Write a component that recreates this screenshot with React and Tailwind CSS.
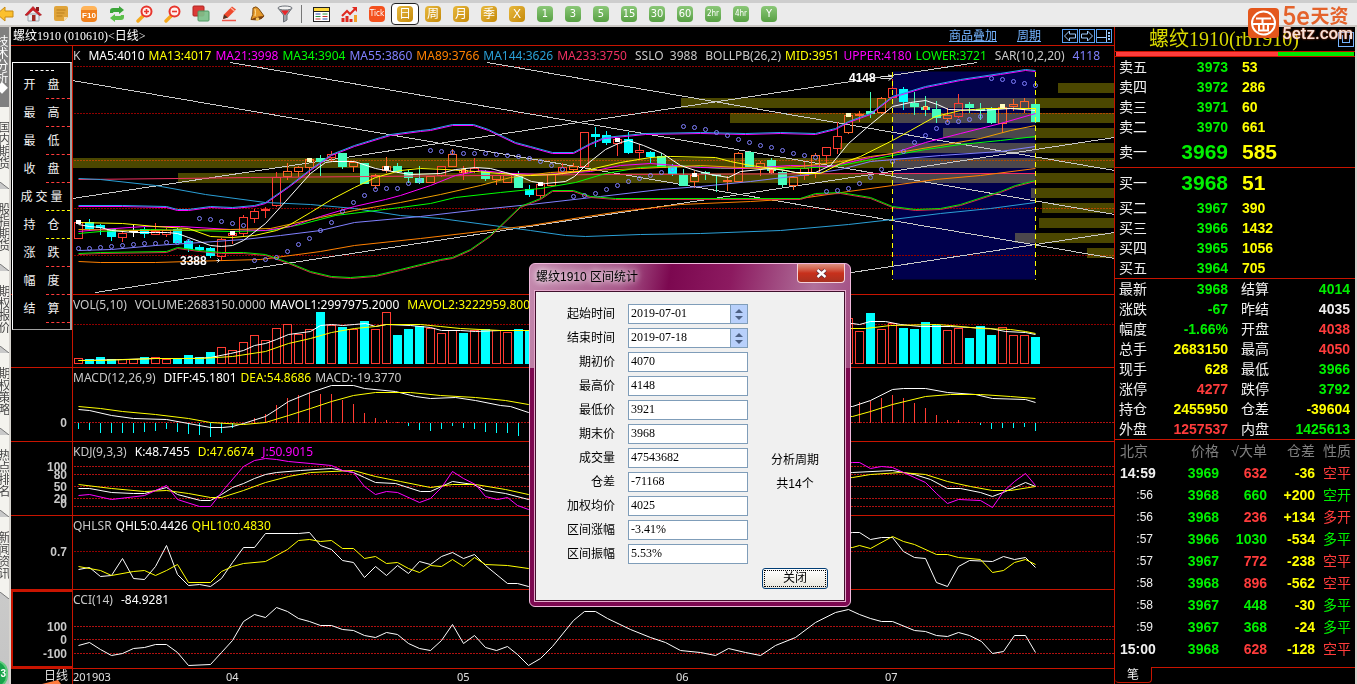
import React from 'react';

const RED = '#ff3c32';
const CYAN = '#00ffff';
const X0 = 78;
const STEP = 11;

// [kind, high, top, bottom, low]
const candles = [
  ['r', 222, 222, 238, 238], ['c', 218, 222, 228, 229], ['c', 223, 225, 227, 234], ['c', 229, 229, 236, 240],
  ['r', 230, 233, 237, 241], ['w', 224, 230, 230, 236], ['c', 226, 229, 233, 237], ['r', 222, 231, 234, 234],
  ['r', 227, 230, 234, 236], ['c', 227, 229, 242, 242], ['c', 238, 241, 248, 251], ['c', 244, 247, 249, 250],
  ['c', 246, 248, 255, 257], ['r', 237, 239, 256, 260], ['r', 231, 233, 235, 243], ['r', 214, 217, 233, 236],
  ['r', 208, 211, 218, 222], ['r', 206, 209, 210, 217], ['r', 171, 177, 205, 206], ['r', 162, 171, 176, 179],
  ['r', 165, 167, 171, 176], ['r', 157, 159, 167, 174], ['c', 154, 158, 161, 175], ['r', 150, 154, 157, 161],
  ['c', 152, 153, 166, 168], ['r', 160, 162, 166, 171], ['c', 163, 163, 183, 183], ['r', 173, 175, 185, 188],
  ['r', 156, 166, 170, 172], ['c', 162, 166, 171, 172], ['c', 169, 172, 177, 182], ['c', 165, 178, 182, 183],
  ['r', 176, 176, 182, 182], ['r', 165, 166, 175, 176], ['r', 148, 154, 166, 166], ['r', 165, 170, 172, 179],
  ['r', 157, 168, 171, 172], ['c', 169, 171, 178, 180], ['r', 175, 175, 179, 184], ['r', 175, 175, 182, 182],
  ['c', 170, 176, 187, 187], ['c', 184, 189, 194, 196], ['r', 182, 184, 195, 198], ['r', 173, 174, 185, 186],
  ['r', 162, 167, 172, 174], ['r', 162, 166, 169, 170], ['r', 132, 132, 166, 166], ['c', 126, 134, 136, 146],
  ['c', 130, 135, 142, 144], ['r', 138, 139, 143, 155], ['c', 131, 139, 152, 153], ['r', 143, 150, 152, 158],
  ['c', 150, 152, 156, 162], ['c', 152, 156, 167, 167], ['c', 163, 166, 173, 175], ['c', 168, 175, 185, 185],
  ['r', 170, 175, 181, 187], ['c', 170, 172, 173, 179], ['c', 173, 174, 174, 191], ['r', 175, 180, 180, 190],
  ['r', 151, 153, 181, 181], ['c', 150, 152, 166, 166], ['r', 160, 163, 168, 175], ['c', 157, 160, 170, 173],
  ['c', 170, 172, 184, 186], ['r', 175, 177, 185, 189], ['r', 161, 168, 175, 179], ['r', 152, 155, 172, 177],
  ['r', 146, 147, 155, 162], ['r', 121, 136, 148, 153], ['r', 113, 115, 132, 133], ['r', 110, 114, 114, 121],
  ['c', 91, 111, 113, 117], ['r', 96, 98, 112, 113], ['r', 78, 88, 97, 97], ['c', 86, 89, 101, 109],
  ['c', 91, 103, 106, 114], ['c', 95, 107, 109, 115], ['c', 100, 109, 117, 122], ['r', 107, 115, 118, 121],
  ['r', 93, 103, 116, 117], ['c', 101, 104, 107, 112], ['c', 102, 109, 109, 119], ['c', 106, 109, 122, 123],
  ['r', 105, 107, 123, 132], ['r', 98, 104, 106, 110], ['r', 97, 101, 108, 112], ['c', 104, 104, 121, 122],
];

const sar = [
  248, 248, 247, 246, 245, 244, 243, 243, 242, 242, 241, 218, 219, 221, 223, 225, 260, 259, 257, 251, 244, 238,
  230, 222, 211, 202, 195, 189, 188, 188, 183, 180, 150, 151, 152, 153, 153, 153, 154, 155, 156, 158, 161, 165,
  169, 196, 195, 193, 189, 185, 181, 178, 175, 172, 169, 126, 127, 129, 132, 135, 139, 142, 145, 147, 150, 153,
  155, 157, 191, 190, 188, 183, 177, 169, 161, 151, 142, 135, 128, 122, 121, 119, 116, 78, 79, 81, 83, 85,
];

// [left, top] of every price level bar, all of them run to the right edge
const levels = [
  [1058, 83], [681, 98], [730, 113], [943, 128], [840, 143], [73, 158], [178, 173], [1031, 188], [1042, 203],
  [1039, 218], [1015, 233], [1087, 248],
];

// [bar index, y, core colour]
const marks = [
  [0, 222, '#fff'], [14, 233, '#fff'], [21, 160, '#ffffc0'], [28, 168, '#fff'], [35, 171, RED], [42, 184, '#fff'],
  [49, 140, '#fff'], [56, 175, '#fff'], [63, 171, RED], [70, 115, '#ffffc0'], [77, 108, RED], [84, 106, '#ffffc0'],
];

const trends = [
  [72, 80, 1114, 258], [230, 62, 1114, 214], [487, 62, 1114, 170],
  [72, 198, 977, 62], [95, 292, 1114, 137], [700, 295, 1114, 232],
];

const upper = '78,206 122,206 166,207 177,210 188,210 210,207 232,208 254,206 265,203 288,187 310,170 331,155 354,146 380,138 390,135 420,131 430,130 452,125 473,125 488,130 515,143 530,147 552,153 573,153 590,144 604,138 645,134 700,133 745,134 780,133 815,134 835,129 848,122 870,114 892,97 925,87 960,80 1000,74 1025,70 1035,71';
const lower = '78,253 100,252 166,251 177,247 199,250 221,252 243,252 265,254 288,262 310,271 331,276 350,277 375,275 400,269 440,259 452,257 470,249 490,235 520,206 540,198 552,190 573,190 590,196 615,198 720,198 800,198 815,193 840,192 870,197 892,206 915,209 940,208 960,204 1000,191 1015,185 1035,180';

const priceLines = [
  ['#f03060', '78,179 178,178 250,177 370,176 600,174 892,173 1035,173'],
  ['#2a9fd6', '78,178 100,179 155,185 205,194 265,202 310,204 354,208 400,215 440,218 500,226 530,230 565,235 585,236 640,234 700,233 780,230 848,224 892,219 940,213 990,208 1035,202'],
  ['#ff8000', '78,261 100,262 155,262 188,261 260,259 320,251 354,245 420,238 480,231 530,225 580,217 620,211 680,204 750,201 800,198 848,191 892,185 935,179 980,175 1035,168'],
  ['#8080ff', '78,250 111,249 155,245 200,242 243,239 280,235 320,230 354,222 420,216 480,209 530,204 600,196 660,189 700,186 750,181 800,175 840,169 870,161 940,155 1000,151 1035,146'],
  ['#00ff00', '78,233 100,231 150,229 190,230 232,231 270,230 300,224 335,215 400,207 430,203 455,197 500,192 540,188 575,182 605,173 640,167 680,165 720,168 760,168 800,168 840,165 892,155 925,149 960,144 1000,140 1035,136'],
  ['#ff00ff', '78,231 100,229 144,226 180,226 230,229 265,230 290,226 320,216 354,206 385,199 400,195 430,185 455,175 480,170 510,173 545,174 590,171 620,165 650,163 700,167 745,168 790,165 830,166 870,157 892,153 925,142 960,133 1000,123 1035,113'],
  ['#f0a000', '78,229 140,230 230,229 270,228 320,217 354,210 400,202 440,194 480,185 510,177 550,172 590,170 640,168 700,165 760,168 800,166 840,161 870,156 892,153 940,145 980,138 1010,130 1035,125'],
  ['#ffff00', '78,222 122,223 155,226 188,228 210,236 232,237 254,235 276,230 288,225 310,212 331,199 354,187 375,177 400,170 420,168 445,169 475,171 500,173 530,175 555,174 585,170 620,162 650,157 670,156 715,157 730,161 750,165 780,169 800,173 820,173 840,163 860,156 892,140 910,130 935,116 960,110 985,108 1035,108'],
  ['#ffffff', '78,224 89,226 100,227 111,230 133,232 155,232 167,232 177,233 188,237 199,241 210,245 221,246 232,245 243,240 265,223 285,201 310,173 325,162 332,161 354,161 375,168 386,170 410,174 440,173 455,169 475,167 490,168 505,172 520,176 531,181 545,183 565,181 574,176 586,164 605,149 620,142 628,140 643,145 662,153 680,165 695,170 710,174 728,177 740,171 760,169 770,168 785,170 795,172 815,172 830,165 848,143 870,124 892,106 910,102 925,100 937,104 948,109 980,110 1010,108 1035,110'],
  ['#ff00ff', upper],
];

const volumes = [
  [0, 'r', 358], [1, 'c', 359], [2, 'c', 357], [3, 'c', 359], [4, 'r', 359], [5, 'r', 359], [6, 'c', 357],
  [7, 'r', 357], [8, 'r', 359], [9, 'c', 359], [10, 'c', 355], [11, 'c', 357], [12, 'c', 352], [13, 'r', 347],
  [14, 'r', 350], [15, 'r', 342], [16, 'r', 335], [17, 'r', 340], [18, 'r', 328], [19, 'r', 324], [20, 'r', 334],
  [21, 'r', 329], [22, 'c', 312], [23, 'r', 325], [24, 'c', 327], [25, 'r', 329], [26, 'c', 321], [27, 'r', 329],
  [28, 'r', 312], [29, 'c', 335], [30, 'c', 329], [31, 'c', 326], [32, 'r', 328], [33, 'r', 333], [34, 'r', 330],
  [35, 'c', 333], [36, 'r', 330], [37, 'c', 329], [38, 'r', 330], [39, 'r', 332], [40, 'c', 329], [41, 'c', 330],
  [70, 'r', 318], [71, 'r', 331], [72, 'c', 313], [73, 'r', 329], [74, 'r', 323], [75, 'c', 328], [76, 'c', 329],
  [77, 'c', 322], [78, 'c', 325], [79, 'r', 330], [80, 'r', 328], [81, 'c', 338], [82, 'c', 326], [83, 'c', 335],
  [84, 'r', 327], [85, 'r', 335], [86, 'r', 335], [87, 'c', 337],
];

const macdLeft = [428, 429, 432, 432, 432, 432, 431, 430, 428, 431, 433, 434, 436, 432, 427, 422, 417, 413, 404, 397, 394, 392, 393, 393, 399, 403, 412, 417, 419, 421, 425, 429, 430, 428, 425, 427, 428, 431, 432, 432, 435];
const macdRight = [401, 400, 397, 394, 397, 402, 407, 414, 419, 419, 421, 424, 428, 427, 427, 426, 430];
const macd = [...macdLeft.map((y, i) => [i, y]), ...macdRight.map((y, i) => [i + 71, y])];

const asks = [['卖五', 3973, 53], ['卖四', 3972, 286], ['卖三', 3971, 60], ['卖二', 3970, 661], ['卖一', 3969, 585]];
const bids = [['买一', 3968, 51], ['买二', 3967, 390], ['买三', 3966, 1432], ['买四', 3965, 1056], ['买五', 3964, 705]];

const G = 'text-[#00f000]';
const R = 'text-[#ff3c3c]';
const Y = 'text-[#ffff00]';
const W = 'text-[#f0f0f0]';

const stats = [
  ['最新', '3968', G, '结算', '4014', G],
  ['涨跌', '-67', G, '昨结', '4035', W],
  ['幅度', '-1.66%', G, '开盘', '4038', R],
  ['总手', '2683150', Y, '最高', '4050', R],
  ['现手', '628', Y, '最低', '3966', G],
  ['涨停', '4277', R, '跌停', '3792', G],
  ['持仓', '2455950', Y, '仓差', '-39604', Y],
  ['外盘', '1257537', R, '内盘', '1425613', G],
];

const ticks = [
  ['14:59', 3969, 632, R, '-36', '空平', R],
  [':56', 3968, 660, G, '+200', '空开', G],
  [':56', 3968, 236, R, '+134', '多开', R],
  [':57', 3966, 1030, G, '-534', '多平', G],
  [':57', 3967, 772, R, '-238', '空平', R],
  [':58', 3968, 896, R, '-562', '空平', R],
  [':58', 3967, 448, G, '-30', '多平', G],
  [':59', 3967, 368, G, '-24', '多平', G],
  ['15:00', 3968, 628, R, '-128', '空平', R],
];

const inLevel = (x, y) => levels.some(([l, t]) => x >= l && y >= t - 1 && y <= t + 11);

/* ---------- toolbar ---------- */

function Magnifier({ plus }) {
  return (
    <svg width="18" height="18" viewBox="0 0 18 18">
      <path d="M2 16 L7 11" stroke="#f5a81c" strokeWidth="3.4" strokeLinecap="round" />
      <circle cx="10.5" cy="6.5" r="5" fill="#fff0ee" stroke="#e8352c" strokeWidth="2" />
      <path d={plus ? 'M8 6.5h5M10.5 4v5' : 'M8 6.5h5'} stroke="#e8352c" strokeWidth="1.6" />
    </svg>
  );
}

const tools = [
  ['返回', <svg width="18" height="18" viewBox="0 0 18 18"><path d="M1 9 L9 2 V6 H17 V12 H9 V16 Z" fill="#fbc02d" stroke="#c98a10" /></svg>],
  ['首页', (
    <svg width="18" height="18" viewBox="0 0 18 18">
      <path d="M4 9h11v7H4z" fill="#e8eef2" stroke="#9aa4ab" />
      <path d="M12 2h3v4h-3z" fill="#8c1d1d" />
      <path d="M1 10 L9 1.5 L17.5 10 L15.5 10.5 L9 5 L3 10.5 Z" fill="#d21f26" stroke="#9c1218" strokeWidth=".6" />
      <path d="M8 10h3.5v6H8z" fill="#a02a22" />
    </svg>
  )],
  ['资讯', (
    <svg width="16" height="18" viewBox="0 0 16 18">
      <path d="M1 3q0-2 2-2h10q2 0 2 2v9l-4 4H3q-2 0-2-2z" fill="#e0a43a" />
      <path d="M15 12l-4 4v-4z" fill="#f7dfae" />
      <path d="M3.500 5h9M3.500 8h8M3.500 11h6" stroke="#b97f1c" />
    </svg>
  )],
  ['F10', (
    <span className="relative flex h-4 w-4 items-end justify-center rounded-sm border-t-4 border-[#ffb45a] bg-[#f0801e] font-['Liberation_Sans',sans-serif] text-[8px] leading-3 font-bold text-white">F10</span>
  )],
  ['刷新', (
    <svg width="16" height="16" viewBox="0 0 16 16">
      <path d="M1 7V5q0-3 3-3h6V0l5 4-5 4V6H5q-1 0-1 1z" fill="#3ca53a" />
      <path d="M15 9v2q0 3-3 3H6v2l-5-4 5-4v2h5q1 0 1-1z" fill="#5cbf4a" />
    </svg>
  )],
  ['放大', <Magnifier plus />],
  ['缩小', <Magnifier />],
  ['叠加', (
    <svg width="18" height="18" viewBox="0 0 18 18">
      <rect x="1" y="1" width="11" height="10" rx="1" fill="#dc3a37" stroke="#b02423" />
      <rect x="6" y="6" width="11" height="10" rx="1" fill="#7cc08a" fillOpacity=".92" stroke="#4f9a63" />
    </svg>
  )],
  ['画线', (
    <svg width="18" height="18" viewBox="0 0 18 18">
      <path d="M2 15.500h14" stroke="#f0564a" strokeWidth="1.500" />
      <path d="M4 9.500 L12 1.500 L16 4.500 L8 12.500 L3 14 Z" fill="#ee4a2e" />
      <path d="M4 9.500 L8 12.500 L3 14 Z" fill="#4a3526" />
      <path d="M11 3 L14.500 6" stroke="#ffb19c" strokeWidth="1.500" />
    </svg>
  )],
  ['预警', (
    <svg width="18" height="18" viewBox="0 0 18 18">
      <path d="M5 3Q8 .5 10.500 3.500L16 11 Q13 16 3 14.500Q5.500 10 5 3z" fill="#e59a2b" stroke="#7c4a12" />
      <path d="M3 14.500Q9 11 16 11Q13 16 3 14.500z" fill="#7c4010" />
      <circle cx="9.500" cy="14" r="1.800" fill="#f6c65c" />
      <path d="M7 4Q8 7 7 11" stroke="#ffe2a0" fill="none" />
    </svg>
  )],
  ['筛选', (
    <svg width="16" height="18" viewBox="0 0 16 18">
      <path d="M1 3 L6.500 10 V17 L10 15 V10 L15 3 Z" fill="#9ea3a9" stroke="#6b7077" />
      <ellipse cx="8" cy="3" rx="7" ry="2" fill="#f3f3f3" stroke="#6b7077" />
      <path d="M4 5.500h8l-4 5z" fill="#e8262a" />
    </svg>
  )],
];

const views = [
  ['报价表', (
    <svg width="17" height="17" viewBox="0 0 17 17">
      <rect x=".5" y="1.500" width="16" height="14" fill="#fff" stroke="#222" />
      <path d="M1 2h15v3H1z" fill="#ffd83a" />
      <path d="M1 5.500h15" stroke="#222" />
      <path d="M2.500 8h5M9.500 13h5" stroke="#2344a8" />
      <path d="M2.500 10.500h5M9.500 8h5" stroke="#28953a" />
      <path d="M2.500 13h5M9.500 10.500h5" stroke="#c22a2a" />
    </svg>
  )],
  ['走势', (
    <svg width="17" height="17" viewBox="0 0 17 17">
      <path d="M2 16v-4M6 16v-6M10 16v-3" stroke="#e02a20" strokeWidth="3" />
      <path d="M14.500 16v-7" stroke="#f1a22a" strokeWidth="3" />
      <path d="M1 10 L6 5 L9 8 L15 2" stroke="#e02a20" strokeWidth="2" fill="none" />
      <path d="M11 1h5v5z" fill="#e02a20" />
    </svg>
  )],
  ['分笔', (
    <span className="flex h-4 w-4 items-center justify-center rounded-sm bg-[#f4511e] font-['DejaVu_Sans_Condensed',sans-serif] text-[8px] leading-4 text-white">Tick</span>
  )],
];

const goldPeriods = ['日', '周', '月', '季', 'X'];
const greenPeriods = ['1', '3', '5', '15', '30', '60', '2hr', '4hr', 'Y'];

function Toolbar() {
  return (
    <header className="overflow-hidden border-t-[3px] border-b-2 border-t-[#cdcdcd] border-b-[#cbc8c4] bg-[#ebebeb]">
      <div className="-ml-[9px] flex h-[22px] items-center">
        {tools.map(([name, icon]) => (
          <button key={name} aria-label={name} className="flex w-7 justify-center">{icon}</button>
        ))}
        <div className="mr-[5px] ml-[2px] h-[18px] w-px bg-[#777]" />
        {views.map(([name, icon]) => (
          <button key={name} aria-label={name} className="flex w-7 justify-center">{icon}</button>
        ))}
        {goldPeriods.map((p, i) => (
          <button key={p} className={`flex h-[22px] w-7 items-center justify-center ${i === 0 ? 'rounded border border-[#222] bg-white' : ''}`}>
            <span className="flex h-4 w-4 items-center justify-center rounded-sm bg-gradient-to-br from-[#e8b93c] to-[#c58a00] text-[12px] leading-4 text-white">{p}</span>
          </button>
        ))}
        {greenPeriods.map((p) => (
          <button key={p} className="flex w-7 justify-center">
            <span className={`flex h-4 w-4 items-center justify-center rounded-sm bg-gradient-to-b from-[#8bc878] to-[#57a043] leading-4 text-white ${p.length > 2 ? "font-['DejaVu_Sans_Condensed',sans-serif] text-[8px]" : "font-['DejaVu_Sans_Condensed',sans-serif] text-[11px]"}`}>{p}</span>
          </button>
        ))}
      </div>
    </header>
  );
}

function Brand() {
  return (
    <a href="#5etz" className="absolute top-2 right-1 z-10 flex items-start gap-[3px] font-['Roboto','Noto_Sans_CJK_SC',sans-serif]">
      <svg width="31" height="30" viewBox="0 0 31 30">
        <rect width="31" height="30" rx="4" fill="#e4571c" />
        <circle cx="15.500" cy="15" r="11.500" fill="none" stroke="#fff" strokeWidth="2" />
        <path d="M8 10.500h15M5 16h9.500v-5M11 16v6.500h9V16h-5M20 16h6M15.500 16v7" stroke="#fff" strokeWidth="2" fill="none" />
      </svg>
      <span className="flex flex-col">
        <span className="flex h-[17px] items-center gap-px text-[#e4632c]">
          <span className="text-[25px] leading-4 font-medium">5e</span>
          <span className="text-[19px] leading-4 font-bold">天资</span>
        </span>
        <span className="text-[17px] leading-4 font-medium text-[#f7e2da] [text-shadow:0_0_2px_#e4571c]">5etz.com</span>
      </span>
    </a>
  );
}

/* ---------- left tabs ---------- */

const tabs = ['国内期货', '股指期货', '期权报价', '期权策略', '热点排名', '新闻资讯'];

function SideTabs() {
  return (
    <nav className="relative flex w-[11px] shrink-0 flex-col overflow-hidden border-r-2 border-[#d6d3ce] bg-gradient-to-b from-[#f2f1ec] to-[#c4c4c4] text-[12px] leading-3">
      <a href="#tech" className="flex h-20 flex-col items-start bg-[#808080] pt-2 text-white">
        <span className="-ml-[5px] [writing-mode:vertical-rl]">技术分析</span>
        <span className="-ml-1">◆</span>
      </a>
      {tabs.map((t) => (
        <a key={t} href={`#${t}`} className="flex h-[82px] flex-col justify-between bg-[#f4f3ee] pt-[14px] text-[#444]">
          <span className="-ml-[5px] [writing-mode:vertical-rl]">{t}</span>
          <svg width="9" height="7" viewBox="0 0 9 7"><path d="M0 0 L9 7 H0 Z" fill="#c9c9c9" /><path d="M0 0 L9 7" stroke="#777" /></svg>
        </a>
      ))}
      <span className="absolute -bottom-1 -left-4 flex h-7 w-6 items-center justify-end rounded-full border-2 border-[#5ecb7c] bg-[#17a34a] text-[10px] font-bold text-white">3</span>
    </nav>
  );
}

/* ---------- chart panes ---------- */

function Grid({ ys, color = '#b01010' }) {
  return ys.map((y) => (
    <line key={y} x1="73" x2="1114" y1={y} y2={y} stroke={color} strokeDasharray="2 1" shapeRendering="crispEdges" />
  ));
}

function Line({ color, points }) {
  return <polyline points={points} fill="none" stroke={color} strokeWidth="1" vectorEffect="non-scaling-stroke" />;
}

function Bar({ x, color, hollow, top, bottom }) {
  return (
    <rect x={x - 4} y={top} width="8" height={Math.max(bottom - top, 1)} fill={hollow ? 'none' : color} stroke={color} shapeRendering="crispEdges" />
  );
}

function Legend({ items }) {
  return (
    <p className="z-[1] flex gap-1 self-start justify-self-start overflow-hidden font-['Noto_Sans',sans-serif] text-[12px] leading-5 whitespace-nowrap [grid-area:1/1]">
      {items.map(([text, color, space]) => (
        <span key={text} className={`${color} ${space ? 'ml-1' : ''}`}>{text}</span>
      ))}
    </p>
  );
}

function Pane({ y, h, size, axis = [], legend, children, active }) {
  return (
    <section className={`flex border-b border-[#c81400] ${size}`}>
      <div className={`w-[62px] shrink-0 border-r border-[#c81400] ${active ? 'border-2' : ''}`}>
        {axis.length > 0 && (
          <svg width="58" height={h} viewBox={`0 ${y} 58 ${h}`} className="overflow-visible font-['Liberation_Sans',sans-serif] text-[12px] font-bold">
            {axis.map(([label, at]) => (
              <text key={label + at} x={active ? 54 : 56} y={at + (active ? 3 : 5)} textAnchor="end" fill="#c8c8c8">{label}</text>
            ))}
          </svg>
        )}
      </div>
      <div className="grid min-w-0 flex-1 grid-rows-1">
        <svg viewBox={`73 ${y} 1041 ${h}`} preserveAspectRatio="none" className="h-full w-full [grid-area:1/1]">
          <g transform="translate(.5 .5)">{children}</g>
        </svg>
        {legend && <Legend items={legend} />}
      </div>
    </section>
  );
}

function PriceChart() {
  return (
    <>
      <rect x="892" y="71" width="143" height="208" fill="#00004c" />
      <Grid ys={[66, 113, 160, 208, 255]} color="#900000" />
      {levels.map(([l, t]) => (
        <rect key={t} x={l - 0.5} y={t - 0.5} width={1114 - l} height="10" fill="#4b4700" className="mix-blend-screen" />
      ))}
      {trends.map(([x1, y1, x2, y2]) => (
        <line key={`${x1}-${y1}`} x1={x1} y1={y1} x2={x2} y2={y2} stroke="#c8c8c8" shapeRendering="crispEdges" />
      ))}
      {candles.map(([kind, high, top, bottom, low], i) => {
        const x = X0 + STEP * i;
        const lit = inLevel(x, (top + bottom) / 2);
        const color = kind === 'w' ? '#fff' : kind === 'r' ? (lit ? '#ff6428' : RED) : lit ? '#46ffbe' : CYAN;
        return (
          <g key={i}>
            <path d={`M${x} ${high}V${top}M${x} ${bottom}V${low}`} stroke={color} shapeRendering="crispEdges" />
            <Bar x={x} color={color} hollow={kind === 'r'} top={top} bottom={bottom} />
          </g>
        );
      })}
      {priceLines.map(([color, points], i) => <Line key={i} color={color} points={points} />)}
      <g transform="translate(0 -1)"><Line color="#2aa0f0" points={upper} /></g>
      <g transform="translate(0 1)"><Line color="#d82848" points={lower} /></g>
      <Line color="#00e800" points={lower} />
      {sar.map((y, i) => (
        <circle key={i} cx={X0 + STEP * i} cy={y} r="2" fill="none" stroke="#8080ff" />
      ))}
      {marks.map(([i, y, color]) => (
        <g key={i} shapeRendering="crispEdges">
          <rect x={X0 + STEP * i - 2.5} y={y - 2.5} width="5" height="4" fill={color === RED ? '#ffd060' : color} />
          {color === RED && <rect x={X0 + STEP * i - 1.5} y={y - 1.5} width="3" height="3" fill={RED} />}
        </g>
      ))}
      <path d="M892 71V279M1035 71V279" stroke="#ffff00" strokeDasharray="5 4" shapeRendering="crispEdges" />
      <path d="M880 76H891M880 78H891M888 74L892 77L888 80M216 260H219M217 258L219 260L217 262" stroke="#e0e0e0" fill="none" />
    </>
  );
}

function Charts() {
  return (
    <div className="relative">
      <Pane
        y={46} h={248} size="h-[249px]"
        legend={[
          ['K', 'text-[#c8c8c8]'], ['MA5:4010', 'text-white', true], ['MA13:4017', 'text-[#ffff00]'],
          ['MA21:3998', 'text-[#ff00ff]'], ['MA34:3904', 'text-[#00ff00]'], ['MA55:3860', 'text-[#8080ff]'],
          ['MA89:3766', 'text-[#ff8000]'], ['MA144:3626', 'text-[#2a9fd6]'], ['MA233:3750', 'text-[#f03060]'],
          ['SSLO  3988', 'text-[#c8c8c8] whitespace-pre', true], ['BOLLPB(26,2)', 'text-[#c8c8c8]', true],
          ['MID:3951', 'text-[#ffff00]'], ['UPPER:4180', 'text-[#ff00ff]'], ['LOWER:3721', 'text-[#00ff00]'],
          ['SAR(10,2,20)', 'text-[#c8c8c8]', true], ['4118', 'text-[#8080ff]', true],
        ]}
      >
        <PriceChart />
      </Pane>

      <Pane
        y={295} h={72} size="h-[73px]"
        legend={[
          ['VOL(5,10)', 'text-[#c8c8c8]'], ['VOLUME:2683150.0000', 'text-[#c8c8c8]', true],
          ['MAVOL1:2997975.2000', 'text-white'], ['MAVOL2:3222959.8000', 'text-[#ffff00]', true],
        ]}
      >
        <Grid ys={[324]} color="#900000" />
        {volumes.map(([i, kind, top]) => (
          <Bar key={i} x={X0 + STEP * i} color={kind === 'r' ? RED : CYAN} hollow={kind === 'r'} top={top} bottom={363} />
        ))}
        <Line color="#fff" points="78,360 122,359 155,358 190,358 210,357 230,353 243,350 254,345 265,343 276,339 288,334 310,331 320,325 331,324 342,325 354,324 365,323 375,326 386,324 410,325 430,327 441,330 460,330 475,331 500,330 528,330 852,323 859,324 870,321 885,321 900,324 920,326 950,326 990,328 1005,331 1025,332 1035,334" />
        <Line color="#ffff00" points="78,360 100,360 155,358 200,358 232,356 265,351 288,343 310,338 331,332 354,328 375,326 386,324 420,324 440,326 460,328 500,330 528,330 852,328 865,328 890,325 936,324 950,325 980,328 1010,329 1025,331 1035,333" />
      </Pane>

      <Pane
        y={368} h={73} size="h-[74px]" axis={[['0', 422]]}
        legend={[
          ['MACD(12,26,9)', 'text-[#c8c8c8]'], ['DIFF:45.1801', 'text-white', true],
          ['DEA:54.8686', 'text-[#ffff00]'], ['MACD:-19.3770', 'text-[#c8c8c8]'],
        ]}
      >
        <Grid ys={[422]} />
        {macd.map(([i, y]) => (
          <line key={i} x1={X0 + STEP * i} x2={X0 + STEP * i} y1="422" y2={y} stroke={y > 422 ? CYAN : RED} shapeRendering="crispEdges" />
        ))}
        <Line color="#fff" points="78,409 89,410 111,415 133,418 166,419 188,423 210,427 222,427 232,426 243,423 265,416 276,409 288,401 310,392 331,385 353,385 364,388 395,391 415,396 430,398 455,397 475,400 500,405 510,406 528,412 852,406 870,400 892,389 903,388 925,388 947,392 975,394 992,398 1025,399 1035,402" />
        <Line color="#ffff00" points="78,406 100,408 122,411 155,414 188,418 210,422 243,424 265,422 288,415 310,408 331,401 353,395 375,392 410,392 440,395 475,397 505,400 528,404 852,416 870,411 892,404 925,396 950,394 980,394 1010,396 1035,398" />
      </Pane>

      <Pane
        y={442} h={73} size="h-[74px]"
        axis={[['100', 466], ['80', 474], ['50', 486], ['20', 498], ['0', 503]]}
        legend={[
          ['KDJ(9,3,3)', 'text-[#c8c8c8]'], ['K:48.7455', 'text-white', true],
          ['D:47.6674', 'text-[#ffff00]', true], ['J:50.9015', 'text-[#ff00ff]', true],
        ]}
      >
        <Grid ys={[466, 474, 486, 498, 506]} />
        <Line color="#fff" points="78,488 89,488 111,492 133,493 144,493 166,487 177,494 200,500 210,500 221,494 232,487 243,483 254,478 265,474 276,472 300,470 331,468 353,472 364,477 375,482 395,483 420,491 430,491 452,481 473,484 485,490 505,493 528,499 852,472 892,470 914,474 930,479 947,488 960,488 980,492 992,496 1005,491 1025,482 1035,486" />
        <Line color="#ffff00" points="78,484 111,488 144,491 166,490 188,493 210,497 221,497 243,490 265,482 288,476 310,472 353,470 375,476 400,481 430,487 452,484 475,484 505,489 528,494 852,477 870,474 900,472 925,474 947,481 970,486 992,490 1010,490 1035,486" />
        <Line color="#ff00ff" points="78,495 89,494 111,499 144,495 155,490 166,485 177,499 199,506 210,506 225,487 243,466 254,460 265,458 276,459 288,461 310,463 331,465 342,470 353,472 364,486 375,494 386,491 397,492 419,502 430,498 441,487 452,471 463,478 475,484 485,496 497,499 507,497 517,505 528,509 852,462 859,462 870,468 881,466 892,467 903,472 925,482 936,493 947,503 958,499 980,500 992,507 1003,491 1014,481 1025,473 1035,485" />
      </Pane>

      <Pane
        y={516} h={73} size="h-[74px]" axis={[['0.7', 551]]}
        legend={[['QHLSR', 'text-[#c8c8c8]'], ['QHL5:0.4426', 'text-white'], ['QHL10:0.4830', 'text-[#ffff00]']]}
      >
        <Grid ys={[551]} color="#900000" />
        <Line color="#fff" points="78,569 89,567 100,576 111,575 122,558 133,578 144,579 155,566 166,545 177,574 188,585 199,584 210,586 221,578 232,562 243,547 254,547 265,533 298,533 309,532 320,545 331,549 342,560 353,562 364,577 375,566 386,575 397,565 408,573 419,561 430,564 441,556 452,552 463,558 474,554 485,565 507,583 517,583 528,586 852,532 859,532 870,539 881,537 892,537 903,551 914,557 925,558 936,582 947,586 958,566 969,560 992,561 1003,556 1014,559 1025,557 1035,567" />
        <Line color="#ffff00" points="78,566 100,570 111,575 133,571 144,570 155,575 166,570 177,564 188,582 210,582 221,571 232,566 243,563 265,561 287,549 298,540 309,539 320,541 331,540 342,548 353,548 364,558 375,556 386,563 397,562 408,568 419,572 430,565 441,566 452,559 463,566 474,557 485,564 507,565 528,568 852,547 859,545 870,548 892,536 903,541 914,544 936,554 947,554 958,557 980,559 992,572 1003,570 1014,562 1025,559 1035,564" />
      </Pane>

      <Pane
        active y={590} h={78} size="h-[79px]" axis={[['100', 626], ['0', 639], ['-100', 653]]}
        legend={[['CCI(14)', 'text-[#c8c8c8]'], ['-84.9281', 'text-white', true]]}
      >
        <Grid ys={[626, 639, 653]} />
        <Line color="#fff" points="78,645 89,642 100,649 111,655 122,653 133,648 144,647 155,644 166,644 177,652 188,665 210,664 221,652 232,640 243,621 254,614 265,617 276,607 287,611 298,618 309,621 320,625 331,625 342,629 353,630 364,635 375,637 386,632 397,634 408,643 419,648 430,650 441,640 452,624 463,643 474,635 485,647 496,650 507,646 517,654 528,665 540,658 552,646 573,620 584,611 595,611 607,618 630,629 650,637 665,642 680,650 700,652 715,655 728,648 745,652 760,655 775,645 795,637 815,622 835,612 848,609 859,614 870,618 881,621 892,621 914,630 925,631 936,635 947,636 958,632 969,635 981,641 992,653 1003,651 1014,635 1025,635 1035,652" />
      </Pane>

      <span className="absolute top-[26px] left-[838px] font-['Liberation_Sans',sans-serif] text-[12px] leading-3 font-bold text-white">4148</span>
      <span className="absolute top-[209px] left-[169px] font-['Liberation_Sans',sans-serif] text-[12px] leading-3 font-bold text-white">3388</span>
      <CursorPanel />
    </div>
  );
}

const cursorRows = [
  ['开盘', false], ['最高', false], ['最低', false], ['收盘', false], ['成交量', true],
  ['持仓', true], ['涨跌', false], ['幅度', false], ['结算', false],
];

function CursorPanel() {
  return (
    <aside className="absolute top-4 left-px w-[60px] border border-r-2 border-white border-r-[#a0a0a0] border-b-[#a0a0a0] bg-black pb-[6px] text-[12px] text-[#f0f0f0]">
      <div className="ml-[17px] h-2 w-6 border-b border-dashed border-white" />
      {cursorRows.map(([name, yellow]) => (
        <div key={name} className="flex h-7 flex-col items-end">
          <div className={`flex h-[27px] w-full items-center justify-center leading-4 ${name.length === 3 ? 'gap-[3px]' : 'gap-3'}`}>
            {[...name].map((c) => <span key={c}>{c}</span>)}
          </div>
          <div className={`w-6 border-b border-dashed ${yellow ? 'border-[#ffff00]' : 'border-[#ff3c3c]'}`} />
        </div>
      ))}
    </aside>
  );
}

function ChartHeader() {
  return (
    <div className="flex h-[19px] items-center border-b border-[#c81400] pl-[2px] text-[12px] leading-[18px] text-white">
      <h1 className="flex-1 font-['Liberation_Serif','Noto_Sans_CJK_SC',serif]">螺纹1910 (010610)&lt;日线&gt;</h1>
      <a href="#overlay" className="text-[#74b4ff] underline">商品叠加</a>
      <a href="#period" className="ml-5 text-[#74b4ff] underline">周期</a>
      <div className="mr-[2px] ml-[21px] flex gap-px">
        {['M13 5H7V2L2 7L7 12V9H13Z', 'M2 5H8V2L13 7L8 12V9H2Z'].map((d, i) => (
          <button key={d} aria-label={['左移', '右移'][i]}>
            <svg width="16" height="14" viewBox="0 0 16 14" fill="none" stroke="#9cccff">
              <rect x=".5" y=".5" width="15" height="13" stroke="#5aa0f0" />
              <path d={d} transform="translate(.5 0)" />
            </svg>
          </button>
        ))}
        <button aria-label="布局">
          <svg width="16" height="14" viewBox="0 0 16 14" fill="none" stroke="#9cccff" shapeRendering="crispEdges">
            <rect x=".5" y=".5" width="15" height="13" stroke="#5aa0f0" />
            <path d="M1 8.500H10M10.500 1V13" />
            <path d="M13 2.500V12" strokeWidth="2" strokeDasharray="2 1" />
          </svg>
        </button>
      </div>
    </div>
  );
}

/* ---------- quote panel ---------- */

function BookRow({ row: [label, price, vol], big, size = 'h-5' }) {
  const num = big ? 'text-[21px]' : 'text-[14px]';
  return (
    <tr className={size}>
      <th className="pl-1 text-left font-normal">{label}</th>
      <td className={`text-right font-bold ${G} ${num}`}>{price}</td>
      <td className={`pl-[14px] text-left font-bold ${Y} ${num}`}>{vol}</td>
    </tr>
  );
}

function QuotePanel() {
  return (
    <aside className="flex w-[243px] shrink-0 flex-col border-r-2 border-l border-r-[#d6d3ce] border-l-[#c81400] font-['Liberation_Sans','Noto_Sans_CJK_SC',sans-serif] text-[14px] leading-5 text-[#f0f0f0]">
      <div className="flex h-6 items-center justify-between pr-px pl-[34px]">
        <h2 className="font-['Liberation_Serif','Noto_Sans_CJK_SC',serif] text-[20px] leading-6 whitespace-nowrap text-[#d8d800]">螺纹1910(rb1910)</h2>
        <button aria-label="信息" className="flex h-[15px] w-4 items-center justify-center border border-[#74b4ff]">
          <span className="h-2 w-2 border border-t-0 border-[#74b4ff]" />
        </button>
      </div>
      <div className="flex h-[6px] border-y border-[#c81400] px-px">
        <div className="w-[68%] bg-[#ff3c3c]" />
        <div className="flex-1 bg-[#00e800]" />
      </div>
      <table className="w-full table-fixed border-b border-[#c81400]">
        <colgroup><col className="w-[45px]" /><col className="w-[68px]" /><col /></colgroup>
        <tbody className="border-b border-[#c81400]">
          {asks.map((r, i) => <BookRow key={r[0]} row={r} big={i === 4} size={i === 4 ? 'h-[30px]' : 'h-5'} />)}
        </tbody>
        <tbody>
          {bids.map((r, i) => <BookRow key={r[0]} row={r} big={i === 0} size={i === 0 ? 'h-[31px]' : 'h-5'} />)}
        </tbody>
      </table>
      <table className="w-full table-fixed border-b border-[#c81400]">
        <colgroup><col className="w-[45px]" /><col className="w-[68px]" /><col className="w-[50px]" /><col /></colgroup>
        <tbody>
          {stats.map(([a, av, ac, b, bv, bc]) => (
            <tr key={a} className="h-5">
              <th className="pl-1 text-left font-normal">{a}</th>
              <td className={`text-right font-bold ${ac}`}>{av}</td>
              <th className="pl-[13px] text-left font-normal">{b}</th>
              <td className={`pr-[5px] text-right font-bold ${bc}`}>{bv}</td>
            </tr>
          ))}
        </tbody>
      </table>
      <table className="w-full table-fixed">
        <colgroup><col className="w-[45px]" /><col className="w-[59px]" /><col className="w-12" /><col className="w-12" /><col /></colgroup>
        <thead>
          <tr className="h-[22px] text-[#808080]">
            <th className="pl-[5px] text-left font-normal">北京</th>
            <th className="text-right font-normal">价格</th>
            <th className="text-right font-normal whitespace-nowrap">√大单</th>
            <th className="text-right font-normal">仓差</th>
            <th className="pl-2 text-left font-normal whitespace-nowrap">性质</th>
          </tr>
        </thead>
        <tbody className="font-bold">
          {ticks.map(([time, price, size, sc, diff, kind, kc], i) => (
            <tr key={i} className="h-[22px]">
              <td className={time.length === 5 ? 'pl-[5px] text-left' : 'pr-[7px] text-right text-[12px] font-normal'}>{time}</td>
              <td className={`text-right ${G}`}>{price}</td>
              <td className={`text-right ${sc}`}>{size}</td>
              <td className={`text-right ${Y}`}>{diff}</td>
              <td className={`pl-2 text-left font-normal whitespace-nowrap ${kc}`}>{kind}</td>
            </tr>
          ))}
        </tbody>
      </table>
      <div className="mt-[7px] flex h-4 text-[12px]">
        <button className="w-[37px] rounded-b border-r border-b border-[#c81400] leading-[14px]">笔</button>
        <div className="flex-1 border-t border-[#c81400]" />
      </div>
    </aside>
  );
}

/* ---------- range statistics dialog ---------- */

const fields = [
  ['起始时间', '2019-07-01', true], ['结束时间', '2019-07-18', true], ['期初价', '4070'], ['最高价', '4148'],
  ['最低价', '3921'], ['期末价', '3968'], ['成交量', '47543682'], ['仓差', '-71168'], ['加权均价', '4025'],
  ['区间涨幅', '-3.41%'], ['区间振幅', '5.53%'],
];

function RangeDialog() {
  return (
    <div role="dialog" aria-labelledby="range-title" className="absolute top-[263px] left-[529px] z-20 w-[322px] rounded-md border border-[#f0b8dc] bg-[#7c0850] bg-[linear-gradient(100deg,#c48aae_0%,#a8588a_28%,#7c0850_42%,#8c1a60_60%,#b0709a_85%,#a04880_100%)] bg-[length:100%_104px] bg-no-repeat px-[5px] pb-[5px] text-[12px] text-black">
      <div className="flex h-[27px] items-start justify-between">
        <h2 id="range-title" className="pl-px leading-[26px] [text-shadow:0_0_6px_#fff,0_0_8px_#fff]">螺纹1910 区间统计</h2>
        <button aria-label="关闭窗口" className="flex h-[19px] w-12 items-center justify-center rounded-b border border-t-0 border-[#f4d0d8] bg-gradient-to-b from-[#dc9080] via-[#c8301c] to-[#a83020]">
          <svg width="13" height="11" viewBox="0 0 13 11"><path d="M2.500 2 L10.500 9 M10.500 2 L2.500 9" stroke="#5a2a3a" strokeWidth="4" /><path d="M2.500 2 L10.500 9 M10.500 2 L2.500 9" stroke="#fff" strokeWidth="2.400" /></svg>
        </button>
      </div>
      <div className="flex items-stretch border border-[#40102c] bg-[#f0f0f0] pt-3 pb-[11px] pl-4 outline outline-[#e4a8cc]">
        <form className="flex flex-col gap-1 pb-[25px]">
          {fields.map(([label, value, spin]) => (
            <div key={label} className="flex h-5 items-center gap-[13px]">
              <label htmlFor={label} className="w-[63px] text-right leading-5">{label}</label>
              <div className="flex h-5 w-[120px] border border-[#7f9db9] bg-white">
                <input id={label} defaultValue={value} className="w-full min-w-0 flex-1 bg-transparent pb-[2px] pl-[2px] font-['Liberation_Serif',serif] text-[12px] leading-4 outline-none" />
                {spin && (
                  <span className="flex w-[17px] flex-col items-center justify-center gap-[3px] border-l border-[#7f9db9] bg-[#b8d0fb]">
                    <button type="button" aria-label={`${label}增加`}><svg width="8" height="4" viewBox="0 0 8 4"><path d="M4 0L8 4H0Z" fill="#4d6185" /></svg></button>
                    <button type="button" aria-label={`${label}减少`}><svg width="8" height="4" viewBox="0 0 8 4"><path d="M0 0H8L4 4Z" fill="#4d6185" /></svg></button>
                  </span>
                )}
              </div>
            </div>
          ))}
        </form>
        <div className="flex flex-1 flex-col items-center justify-between pt-36 pr-[2px]">
          <p className="text-center leading-6">分析周期<br />共14个</p>
          <button className="h-[21px] w-[66px] rounded-[3px] border border-[#003c74] bg-gradient-to-b from-white to-[#e8e6dc] p-px">
            <span className="block border border-dotted border-black leading-[15px]">关闭</span>
          </button>
        </div>
      </div>
    </div>
  );
}

export default function App() {
  return (
    <div className="relative min-h-screen overflow-hidden bg-black font-['Liberation_Sans','Noto_Sans_CJK_SC',sans-serif]">
      <Toolbar />
      <main className="flex">
        <SideTabs />
        <div className="min-w-0 flex-1">
          <ChartHeader />
          <Charts />
          <div className="flex h-[15px] text-[12px] leading-[15px] text-[#e0e0e0]">
            <div className="relative w-[62px] shrink-0 border-r border-[#c81400] pr-1 text-right">
              日线
              <svg width="20" height="4" viewBox="0 0 20 4" className="absolute right-[10px] bottom-0"><path d="M0 4L16 0L19 4Z" fill="#ff7a3c" /></svg>
            </div>
            <div className="grid flex-1 grid-cols-[153fr_231fr_219fr_209fr_229fr] font-['Noto_Sans',sans-serif] text-[11px]">
              {['201903', '04', '05', '06', '07'].map((m) => <span key={m}>{m}</span>)}
            </div>
          </div>
        </div>
        <QuotePanel />
      </main>
      <Brand />
      <RangeDialog />
    </div>
  );
}
